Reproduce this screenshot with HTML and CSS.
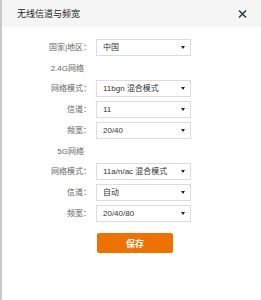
FILE: index.html
```html
<!DOCTYPE html>
<html>
<head>
  <meta charset="utf-8">
  <title>无线信道与频宽</title>
  <link rel="stylesheet" href="styles.css">
</head>
<body>
  <div class="dialog">
    <header class="dialog-head">
      <h1>无线信道与频宽</h1>
      <svg class="close" width="9" height="8" viewBox="0 0 9 8">
        <path d="M1 0.5 L8 7.5 M8 0.5 L1 7.5" stroke="#2f3b4a" stroke-width="1.5" fill="none"/>
      </svg>
    </header>

    <form class="dialog-body">
      <div class="row">
        <label>国家|地区：</label>
        <div class="select"><select><option>中国</option></select></div>
      </div>

      <div class="section">2.4G网络</div>
      <div class="row">
        <label>网络模式：</label>
        <div class="select"><select><option>11bgn 混合模式</option></select></div>
      </div>
      <div class="row">
        <label>信道：</label>
        <div class="select"><select><option>11</option></select></div>
      </div>
      <div class="row">
        <label>频宽：</label>
        <div class="select"><select><option>20/40</option></select></div>
      </div>

      <div class="section">5G网络</div>
      <div class="row">
        <label>网络模式：</label>
        <div class="select"><select><option>11a/n/ac 混合模式</option></select></div>
      </div>
      <div class="row">
        <label>信道：</label>
        <div class="select"><select><option>自动</option></select></div>
      </div>
      <div class="row">
        <label>频宽：</label>
        <div class="select"><select><option>20/40/80</option></select></div>
      </div>

      <button type="button" class="save-btn">保存</button>
    </form>
  </div>
</body>
</html>
```

FILE: styles.css
```css
body {
  margin: 0;
  font-family: "Liberation Sans", "Noto Sans CJK SC", sans-serif;
  background: #fff;
}

.dialog {
  min-height: 300px;
  border-left: 2px solid #c9c9c9;
  box-sizing: border-box;
}

.dialog-head {
  height: 27px;
  box-sizing: border-box;
  display: flex;
  align-items: center;
  justify-content: space-between;
  padding: 0 14px 0 15px;
  background: #f5f5f5;
}

.dialog-head h1 {
  margin: 0;
  font-size: 9px;
  line-height: 12px;
  font-weight: normal;
  color: #222;
}

.close {
  display: block;
}

.dialog-body {
  padding-top: 12px;
}

.row {
  display: flex;
  align-items: center;
  height: 17px;
  margin-bottom: 4px;
}

.row label {
  width: 89px;
  text-align: right;
  font-size: 8px;
  line-height: 17px;
  color: #666;
  margin-right: 5px;
  white-space: nowrap;
}

.select {
  position: relative;
  width: 95px;
  height: 17px;
}

.select select {
  appearance: none;
  -webkit-appearance: none;
  display: block;
  width: 100%;
  height: 100%;
  margin: 0;
  padding: 0 0 0 6px;
  border: 1px solid #dcdcdc;
  border-radius: 0;
  background: #fff;
  font-family: "Liberation Sans", "Noto Sans CJK SC", sans-serif;
  font-size: 8px;
  color: #333;
  box-sizing: border-box;
  outline: none;
}

.select::after {
  content: "";
  position: absolute;
  right: 6px;
  top: 7px;
  border-left: 2px solid transparent;
  border-right: 2px solid transparent;
  border-top: 3px solid #222;
  pointer-events: none;
}

.section {
  margin: 7px 0 5px 0;
  width: 82px;
  text-align: right;
  line-height: 12px;
  font-size: 8px;
  color: #666;
}

.save-btn {
  display: block;
  margin: 11px 0 0 95px;
  width: 76px;
  height: 20px;
  border: none;
  border-radius: 2px;
  background: #ee7203;
  color: #fff;
  font-family: "Liberation Sans", "Noto Sans CJK SC", sans-serif;
  font-size: 9px;
  font-weight: bold;
  cursor: pointer;
}
```
